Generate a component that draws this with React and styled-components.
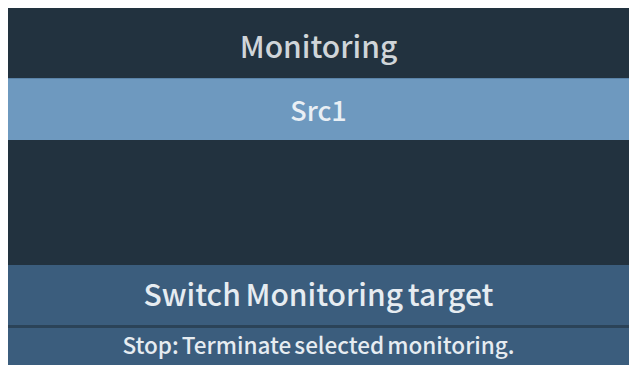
import React from "react";
import styled, { createGlobalStyle } from "styled-components";

const Global = createGlobalStyle`
  html, body { margin: 0; padding: 0; background: #ffffff; }
  body { padding: 8px 0 0 8px; font-family: "Noto Sans CJK JP", "Noto Sans", sans-serif; }
`;

const Panel = styled.div`
  display: flex;
  flex-direction: column;
  width: 621px;
  height: 357px;
  background: #22323f;
  overflow: hidden;
`;

const Header = styled.div`
  height: 70px;
  display: flex;
  align-items: center;
  justify-content: center;
  color: #d0d5d9;
  font-size: 30px;
  font-weight: 500;
  padding-top: 3px;
  box-sizing: border-box;
`;

const Item = styled.div`
  height: 62px;
  display: flex;
  align-items: center;
  justify-content: center;
  background: ${(p) => (p.$selected ? "#6e99bf" : "transparent")};
  color: #e9eff5;
  font-size: 27px;
  font-weight: 500;
  border-top: 1px solid ${(p) => (p.$selected ? "#5a83a8" : "transparent")};
  box-sizing: border-box;
`;

const Spacer = styled.div`
  flex: 1;
`;

const ActionBar = styled.div`
  height: 60px;
  display: flex;
  align-items: center;
  justify-content: center;
  background: #3b5d7d;
  color: #e6ecf1;
  font-size: 30px;
  font-weight: 500;
  word-spacing: -2px;
  padding-bottom: 5px;
  box-sizing: border-box;
`;

const Divider = styled.div`
  height: 3px;
  background: #2b4358;
`;

const Hint = styled.div`
  height: 37px;
  display: flex;
  align-items: center;
  justify-content: center;
  background: #3b5d7d;
  color: #e6ecf1;
  font-size: 22.5px;
  font-weight: 500;
  word-spacing: -2px;
  padding-bottom: 6px;
  box-sizing: border-box;
`;

export default function App() {
  return (
    <>
      <Global />
      <Panel>
        <Header>Monitoring</Header>
        <Item $selected>Src1</Item>
        <Spacer />
        <ActionBar>Switch Monitoring target</ActionBar>
        <Divider />
        <Hint>Stop: Terminate selected monitoring.</Hint>
      </Panel>
    </>
  );
}
